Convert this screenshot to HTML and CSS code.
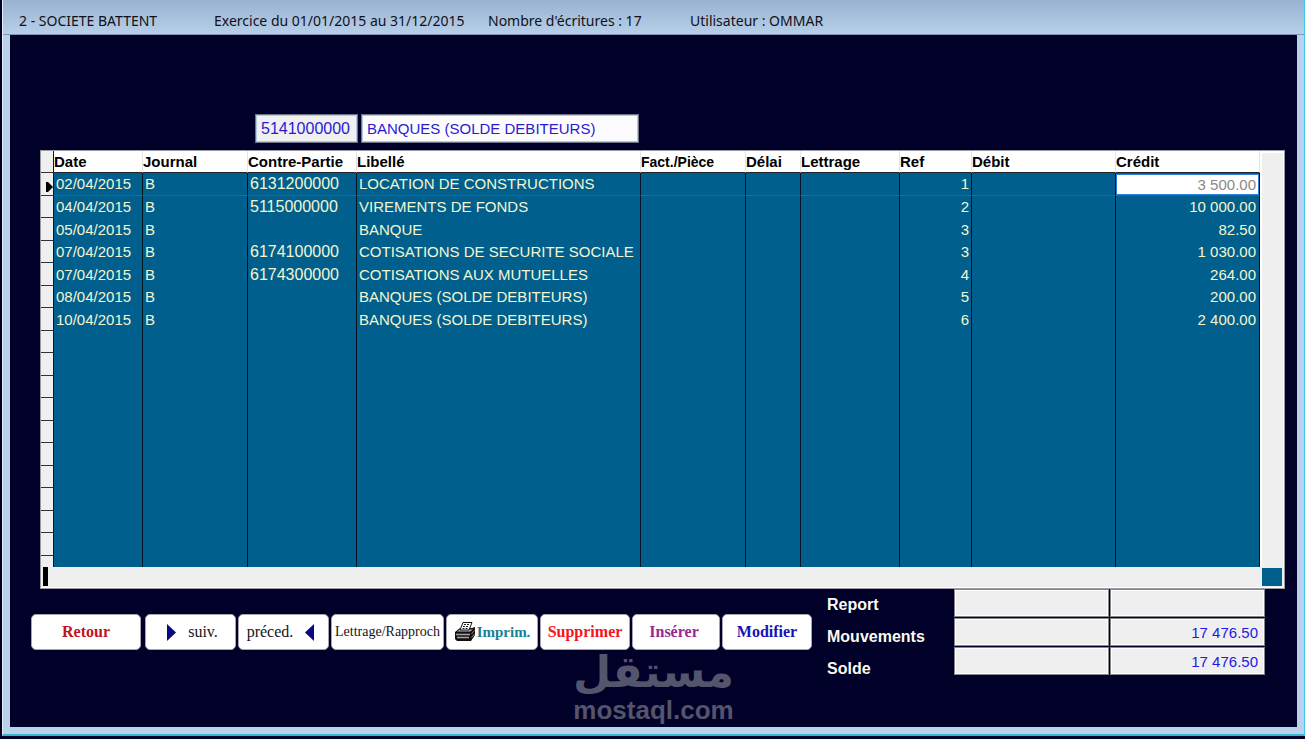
FILE: index.html
```html
<!DOCTYPE html>
<html lang="fr">
<head>
<meta charset="utf-8">
<title>2 - SOCIETE BATTENT</title>
<link rel="stylesheet" href="styles.css">
</head>
<body>
<div class="window">
  <header class="titlebar">
    <span>2 - SOCIETE BATTENT</span>
    <span>Exercice du 01/01/2015 au 31/12/2015</span>
    <span>Nombre d'écritures : 17</span>
    <span>Utilisateur : OMMAR</span>
  </header>
  <main class="client">
    <div class="account">
      <input class="field account-code" type="text" value="5141000000" aria-label="Compte" readonly>
      <input class="field account-name" type="text" value="BANQUES (SOLDE DEBITEURS)" aria-label="Intitulé du compte">
    </div>

    <div class="grid-box">
      <div class="grid-main">
        <table class="entries">
          <colgroup>
            <col class="c-sel"><col class="c-date"><col class="c-journal"><col class="c-contre"><col class="c-libelle"><col class="c-fact"><col class="c-delai"><col class="c-lettrage"><col class="c-ref"><col class="c-debit"><col class="c-credit">
          </colgroup>
          <thead>
            <tr><th class="sel"></th><th>Date</th><th>Journal</th><th>Contre-Partie</th><th>Libellé</th><th class="small">Fact./Pièce</th><th>Délai</th><th>Lettrage</th><th>Ref</th><th>Débit</th><th>Crédit</th></tr>
          </thead>
          <tbody>
            <tr class="current"><td class="sel"><svg class="marker" viewBox="0 0 7 10" aria-hidden="true"><path d="M0 0h2l5 5-5 5H0z"/></svg></td><td>02/04/2015</td><td>B</td><td class="code">6131200000</td><td>LOCATION DE CONSTRUCTIONS</td><td></td><td></td><td></td><td class="num">1</td><td></td><td class="num edit"><input class="cell-input" type="text" value="3 500.00" aria-label="Crédit"></td></tr>
            <tr><td class="sel"></td><td>04/04/2015</td><td>B</td><td class="code">5115000000</td><td>VIREMENTS DE FONDS</td><td></td><td></td><td></td><td class="num">2</td><td></td><td class="num">10 000.00</td></tr>
            <tr><td class="sel"></td><td>05/04/2015</td><td>B</td><td></td><td>BANQUE</td><td></td><td></td><td></td><td class="num">3</td><td></td><td class="num">82.50</td></tr>
            <tr><td class="sel"></td><td>07/04/2015</td><td>B</td><td class="code">6174100000</td><td>COTISATIONS DE SECURITE SOCIALE</td><td></td><td></td><td></td><td class="num">3</td><td></td><td class="num">1 030.00</td></tr>
            <tr><td class="sel"></td><td>07/04/2015</td><td>B</td><td class="code">6174300000</td><td>COTISATIONS AUX MUTUELLES</td><td></td><td></td><td></td><td class="num">4</td><td></td><td class="num">264.00</td></tr>
            <tr><td class="sel"></td><td>08/04/2015</td><td>B</td><td></td><td>BANQUES (SOLDE DEBITEURS)</td><td></td><td></td><td></td><td class="num">5</td><td></td><td class="num">200.00</td></tr>
            <tr><td class="sel"></td><td>10/04/2015</td><td>B</td><td></td><td>BANQUES (SOLDE DEBITEURS)</td><td></td><td></td><td></td><td class="num">6</td><td></td><td class="num">2 400.00</td></tr>
            <tr><td class="sel"></td><td></td><td></td><td></td><td></td><td></td><td></td><td></td><td></td><td></td><td></td></tr>
            <tr><td class="sel"></td><td></td><td></td><td></td><td></td><td></td><td></td><td></td><td></td><td></td><td></td></tr>
            <tr><td class="sel"></td><td></td><td></td><td></td><td></td><td></td><td></td><td></td><td></td><td></td><td></td></tr>
            <tr><td class="sel"></td><td></td><td></td><td></td><td></td><td></td><td></td><td></td><td></td><td></td><td></td></tr>
            <tr><td class="sel"></td><td></td><td></td><td></td><td></td><td></td><td></td><td></td><td></td><td></td><td></td></tr>
            <tr><td class="sel"></td><td></td><td></td><td></td><td></td><td></td><td></td><td></td><td></td><td></td><td></td></tr>
            <tr><td class="sel"></td><td></td><td></td><td></td><td></td><td></td><td></td><td></td><td></td><td></td><td></td></tr>
            <tr><td class="sel"></td><td></td><td></td><td></td><td></td><td></td><td></td><td></td><td></td><td></td><td></td></tr>
            <tr><td class="sel"></td><td></td><td></td><td></td><td></td><td></td><td></td><td></td><td></td><td></td><td></td></tr>
            <tr><td class="sel"></td><td></td><td></td><td></td><td></td><td></td><td></td><td></td><td></td><td></td><td></td></tr>
            <tr class="partial"><td class="sel"></td><td></td><td></td><td></td><td></td><td></td><td></td><td></td><td></td><td></td><td></td></tr>
          </tbody>
        </table>
        <div class="vscroll"></div>
      </div>
      <div class="hscroll"><span class="splitter"></span><span class="corner"></span></div>
    </div>

    <div class="footer">
      <div class="actions">
        <button class="btn b-retour" type="button">Retour</button>
        <button class="btn b-suiv" type="button"><svg class="arrow" viewBox="0 0 9 17" aria-hidden="true"><path d="M0 0l9 8.500L0 17z"/></svg>suiv.</button>
        <button class="btn b-preced" type="button">préced.<svg class="arrow" viewBox="0 0 9 17" aria-hidden="true"><path d="M9 0L0 8.500L9 17z"/></svg></button>
        <button class="btn b-lettrage" type="button">Lettrage/Rapproch</button>
        <button class="btn b-imprim" type="button"><svg class="printer" viewBox="0 0 22 20" aria-hidden="true">
          <path d="M1 10l5-4h12l3-1v8l-4 6H3l-2-2z" fill="#111"/>
          <path d="M3 9.500l3-2h13l-3 2z" fill="#b8b4b4"/>
          <path d="M2 12.500h14M3 15.500h12" stroke="#aaa5a5" fill="none" stroke-width="1.500"/>
          <path d="M17.500 12l3-3.500M17.500 15.500l3-3.500" stroke="#8a8585" fill="none"/>
          <path d="M6 8l3-7.500h9L15 8z" fill="#fff" stroke="#111"/>
          <path d="M10 2.500h5M9 4.500h5M8.500 6.500h5" stroke="#222" stroke-dasharray="2 1"/>
        </svg>Imprim.</button>
        <button class="btn b-supprimer" type="button">Supprimer</button>
        <button class="btn b-inserer" type="button">Insérer</button>
        <button class="btn b-modifier" type="button">Modifier</button>
      </div>
      <div class="total-labels">
        <label for="report">Report</label>
        <label for="mouvements">Mouvements</label>
        <label for="solde">Solde</label>
      </div>
      <div class="totals">
        <input class="total" type="text" aria-label="Report débit" readonly>
        <input class="total" type="text" id="report" readonly>
        <input class="total" type="text" aria-label="Mouvements débit" readonly>
        <input class="total" type="text" id="mouvements" value="17 476.50" readonly>
        <input class="total" type="text" aria-label="Solde débit" readonly>
        <input class="total" type="text" id="solde" value="17 476.50" readonly>
      </div>
    </div>
    <div class="watermark">
      <span class="mark-ar" lang="ar" dir="rtl">مستقل</span>
      <span class="mark-en">mostaql.com</span>
    </div>
  </main>
</div>
</body>
</html>
```
FILE: styles.css
```css
* { box-sizing: border-box; }

body {
  margin: 0;
  min-height: 100vh;
  display: flex;
  flex-direction: column;
  padding: 0 0 3px 2px;
  background: #000028;
  font-family: "Liberation Sans", Arial, sans-serif;
  font-size: 15px;
}

.window {
  flex: 1;
  display: flex;
  flex-direction: column;
  padding: 0 7px 7px;
  background: #b9d1ea;
  border-left: 1px solid #e4ecf5;
  border-right: 1px solid #45c8ee;
  border-bottom: 2px solid #35b4cf;
}

.titlebar {
  display: grid;
  grid-template-columns: 195px 274px 202px auto;
  align-items: center;
  height: 35px;
  margin: 0 -7px;
  padding: 6px 16px 0;
  background: linear-gradient(#98b2d0, #b7cfe9);
  border-bottom: 1px solid #8097b4;
  color: #101018;
  font-family: "Noto Sans", "Open Sans", sans-serif;
  font-size: 14px;
  white-space: nowrap;
}

.client {
  position: relative;
  flex: 1;
  padding: 79px 12px 0 21px;
  background: #000028;
}

.account {
  display: flex;
  gap: 3px;
  margin: 0 0 7px 224px;
}

.field {
  height: 29px;
  padding: 0 4px;
  border: 2px solid #b3cbe2;
  outline: 1px solid #6d7488;
  outline-offset: -1px;
  background: #fcfcff;
  color: #2a1bd0;
  font: inherit;
}
.account-code { width: 103px; background: #f0f0f0; font-size: 16px; }
.account-name { width: 278px; }

.grid-box {
  margin-left: 9px;
  border: 1px solid #9a9aa4;
  background: #efefef;
}

.grid-main { display: flex; }

.entries {
  flex: 1;
  table-layout: fixed;
  width: 0;
  border-collapse: separate;
  border-spacing: 0;
  background: #005f8d;
  color: #f4f6cf;
}
.c-sel { width: 13px; }
.c-date { width: 89px; }
.c-journal { width: 105px; }
.c-contre { width: 109px; }
.c-fact { width: 105px; }
.c-delai { width: 55px; }
.c-lettrage { width: 99px; }
.c-ref { width: 72px; }
.c-debit { width: 144px; }
.c-credit { width: 144px; }

.entries th {
  height: 22px;
  padding: 0;
  background: #fff;
  border-right: 1px solid #e6e6e6;
  border-bottom: 1px solid #202428;
  color: #000;
  font-size: 15px;
  line-height: 20px;
  text-align: left;
  white-space: nowrap;
}
.entries th.small { font-size: 14px; }

.entries td {
  height: 23px;
  padding: 0 2px;
  border-right: 1px solid #001420;
  line-height: 20px;
  white-space: nowrap;
}
.entries tr:nth-child(even) td { height: 22px; }
.entries tr.partial td { height: 11px; }
.entries td.code { font-size: 16px; }
.entries td.num { text-align: right; padding: 0 2px 0 0; }
.entries td.num:last-child { padding-right: 3px; }

.entries .sel {
  padding: 0;
  background: #efefef;
  border-right: 1px solid #14181c;
  border-bottom: 1px solid #30343a;
}
.entries .partial .sel { border-bottom: 0; }
.entries .current td:not(.sel) { border-bottom: 1px solid #0070c0; }
.entries td.edit.num { padding: 0; }

.marker {
  display: block;
  width: 7px;
  height: 10px;
  margin: 5px 0 0 auto;
}

.cell-input {
  display: block;
  width: 100%;
  height: 21px;
  padding: 0 2px;
  border: 1px solid #2a80d8;
  background: #fff;
  color: #8a8a82;
  font: inherit;
  text-align: right;
}

.vscroll {
  width: 24px;
  border: solid #fff;
  border-width: 2px 1px 0 2px;
}

.hscroll {
  display: flex;
  justify-content: space-between;
  height: 21px;
  padding: 0 2px 1px;
  border-bottom: 1px solid #fff;
}
.splitter { width: 5px; background: #000; }
.corner { width: 20px; margin-top: 1px; background: #005f8d; }

.footer { display: flex; }

.actions {
  display: flex;
  gap: 2px;
  margin-top: 25px;
  height: 36px;
}

.btn {
  display: flex;
  align-items: center;
  justify-content: center;
  padding: 0;
  border: 1px solid #a5a5ad;
  border-radius: 5px;
  background: #fff;
  color: #14141c;
  font-family: "Liberation Serif", "Times New Roman", serif;
  font-size: 16px;
  white-space: nowrap;
}
.b-retour { width: 110px; margin-right: 2px; color: #c0141c; font-weight: bold; }
.b-suiv { width: 91px; gap: 12px; padding-left: 4px; }
.b-preced { width: 91px; gap: 12px; padding-right: 6px; }
.b-lettrage { width: 113px; font-size: 14px; }
.b-imprim { width: 92px; gap: 1px; color: #168295; font-size: 15px; font-weight: bold; }
.b-supprimer { width: 90px; color: #f5141c; font-weight: bold; }
.b-inserer { width: 88px; padding-right: 4px; color: #982890; font-weight: bold; }
.b-modifier { width: 90px; color: #1414b4; font-weight: bold; }

.arrow { width: 9px; height: 17px; fill: #0a0a80; }
.printer { width: 22px; height: 20px; }

.total-labels {
  display: flex;
  flex-direction: column;
  margin-left: 15px;
  color: #fafaf0;
  font-size: 16px;
  font-weight: bold;
  line-height: 32px;
}

.totals {
  display: grid;
  grid-template-columns: 155px 155px;
  gap: 1px;
  align-content: start;
  margin: 0 20px 0 auto;
}
.total {
  width: 100%;
  height: 28px;
  padding: 0 5px;
  border: 2px solid #fff;
  outline: 1px solid #85858c;
  outline-offset: -1px;
  background: #efefef;
  color: #2218e8;
  font: inherit;
  text-align: right;
}

.watermark {
  position: absolute;
  left: 0;
  right: 0;
  bottom: 0;
  display: flex;
  flex-direction: column;
  align-items: center;
  color: #54546c;
  font-weight: bold;
  pointer-events: none;
}
.mark-ar { font-family: "DejaVu Sans", sans-serif; font-size: 44px; line-height: 42px; }
.mark-en { font-size: 26px; line-height: 34px; }
```
